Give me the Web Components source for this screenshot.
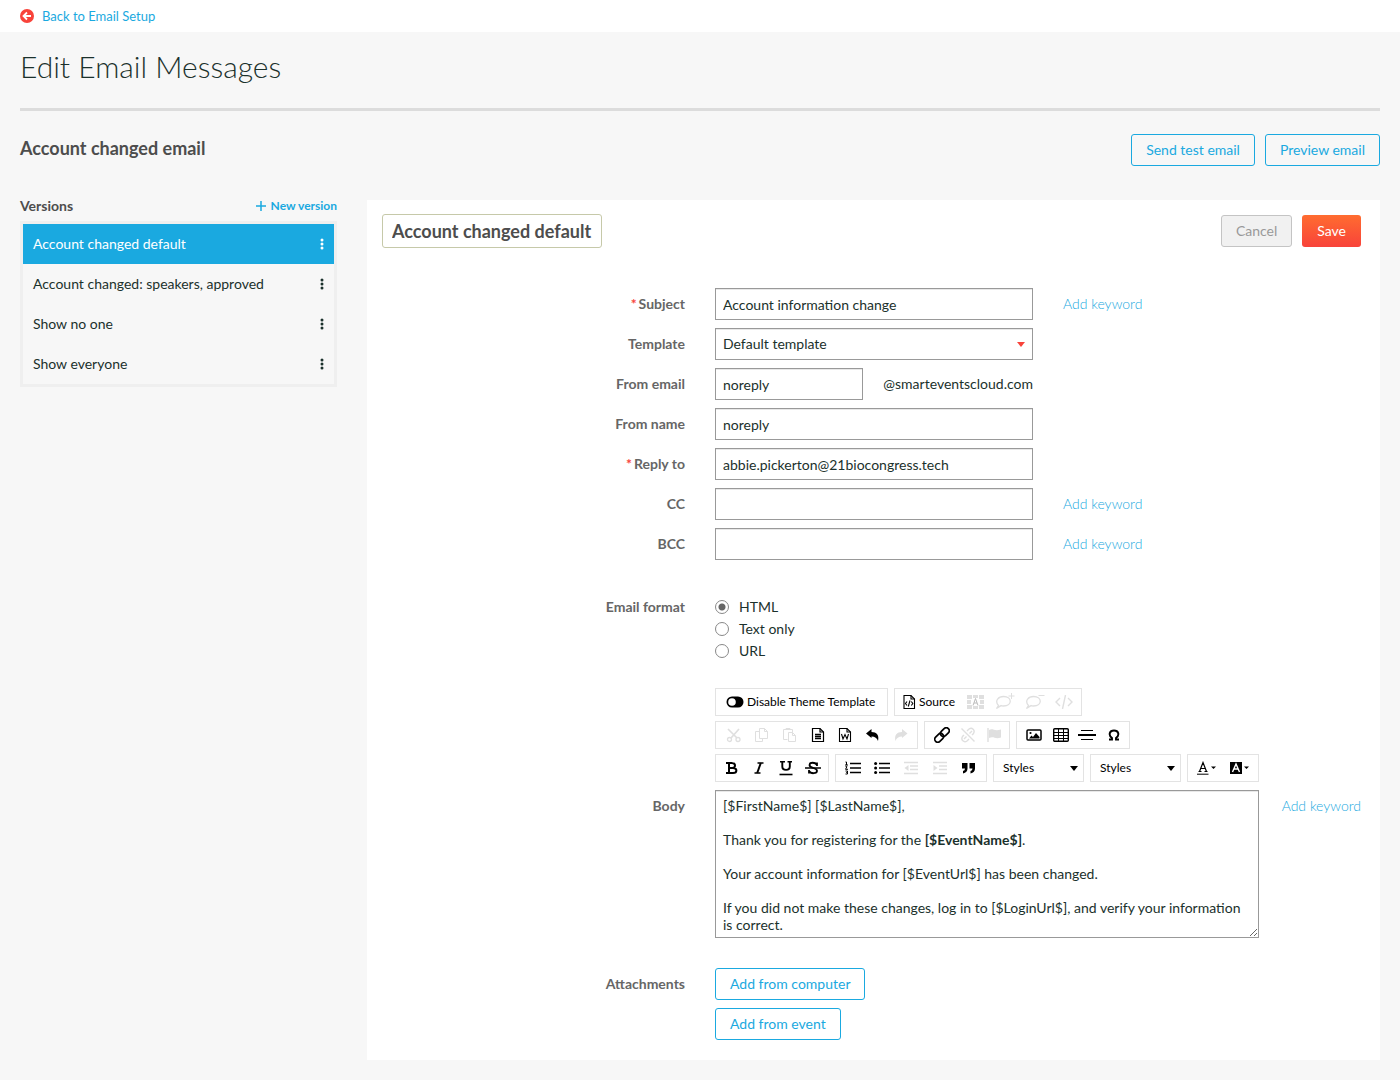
<!DOCTYPE html>
<html lang="en">
<head>
<meta charset="utf-8">
<meta name="viewport" content="width=device-width, initial-scale=1">
<title>Edit Email Messages</title>
<style>
    :root {
        --blue: #1aa9e0;
        --red: #f8433a;
        --ink: #1b312c;
        --heading: #4d4d4d;
        --line: #e3e3e3;
    }

    body {
        margin: 0;
        background: #f7f7f7;
        color: var(--ink);
        font: 14px/16px Lato, "Liberation Sans", sans-serif;
    }
</style>
</head>
<body>
<email-page>
    <back-link slot="top" href="#setup">Back to Email Setup</back-link>
    <app-button slot="actions">Send test email</app-button>
    <app-button slot="actions">Preview email</app-button>

    <version-list slot="side">
        <version-item active>Account changed default</version-item>
        <version-item>Account changed: speakers, approved</version-item>
        <version-item>Show no one</version-item>
        <version-item>Show everyone</version-item>
    </version-list>

    <message-panel name="Account changed default">
        <app-button slot="actions" kind="muted">Cancel</app-button>
        <app-button slot="actions" kind="primary">Save</app-button>

        <text-field label="Subject" value="Account information change" required keyword></text-field>
        <select-field label="Template" value="Default template"></select-field>
        <text-field label="From email" value="noreply" suffix="@smarteventscloud.com"></text-field>
        <text-field label="From name" value="noreply"></text-field>
        <text-field label="Reply to" value="abbie.pickerton@21biocongress.tech" required></text-field>
        <text-field label="CC" keyword></text-field>
        <text-field label="BCC" keyword></text-field>

        <radio-field label="Email format" options="HTML,Text only,URL"></radio-field>

        <body-editor>
            <p>[$FirstName$] [$LastName$],</p>
            <p>Thank you for registering for the <b>[$EventName$]</b>.</p>
            <p>Your account information for [$EventUrl$] has been changed.</p>
            <p>If you did not make these changes, log in to [$LoginUrl$], and verify your information is correct.</p>
        </body-editor>

        <attachment-field></attachment-field>
    </message-panel>
</email-page>

<script>
const svg = (w, h, body, extra = '') =>
    `<svg width="${w}" height="${h}" viewBox="0 0 ${w} ${h}" fill="none" stroke="currentColor" aria-hidden="true" ${extra}>${body}</svg>`;

const PAGE = '<path d="M1.5 1.5H9L12.500 5v9.500h-11z"/><path d="M9 1.500V5h3.500"/>';

const ICONS = {
    back: svg(14, 14, '<circle cx="7" cy="7" r="7" fill="#f8433a" stroke="none"/><path d="M11 7H4M7 3.5 3.5 7 7 10.5" stroke="#fff" stroke-width="1.8"/>'),
    plus: svg(10, 10, '<path d="M5 0v10M0 5h10" stroke-width="1.5"/>'),
    dots: svg(4, 12, '<g fill="currentColor" stroke="none"><circle cx="2" cy="2" r="1.5"/><circle cx="2" cy="6" r="1.5"/><circle cx="2" cy="10" r="1.5"/></g>'),
    toggle: svg(18, 12, '<rect x=".5" y=".5" width="17" height="11" rx="5.500" fill="currentColor" stroke="none"/><circle cx="6" cy="6" r="3.800" fill="#fff" stroke="none"/>'),
    source: svg(13, 16, '<path d="M1 1.500h7l3.500 3.500v9.500H1z"/><path d="M8 1.500V5h3.500M4 7.500 2.500 9.500 4 11.500M8.300 7.500l1.500 2-1.500 2M7 6.500 5.300 12.500"/>', 'stroke-width="1.1"'),
    blocks: svg(18, 16, '<g fill="currentColor" stroke="none"><path d="M0 1h5v4H0zM6 1h5v3H6zM12 1h5v4h-5zM0 6h4v4H0zM13 6h4v4h-4zM0 11h5v4H0zM6 12h5v3H6zM12 11h5v4h-5z"/></g><path d="m6 11.500 2.500-7 2.500 7M7 9h3" stroke="#bbb"/>'),
    commentAdd: svg(20, 18, '<path d="M3.500 12.500C-1 7.500 4 3.500 8.500 3.500c9 0 9 9.500 0 9.500-1 0-2 0-2.500-.4L1.500 15.500z" stroke-width="1.3"/><path d="M16.500 0v6M13.500 3h6"/>'),
    commentRemove: svg(20, 18, '<path d="M3.500 12.500C-1 7.500 4 3.500 8.500 3.500c9 0 9 9.500 0 9.500-1 0-2 0-2.500-.4L1.500 15.500z" stroke-width="1.3"/><path d="M13.500 2.500h6"/>'),
    code: svg(18, 14, '<path d="M5 3 1 7l4 4M13 3l4 4-4 4M10.500 0 7.500 14" stroke-width="1.4"/>'),
    cut: svg(16, 16, '<path d="m2 2 9 9M13 2 5 11" stroke-width="1.7"/><circle cx="3.500" cy="12.500" r="2"/><circle cx="12" cy="12.500" r="2"/>', 'stroke-width="1.3"'),
    copy: svg(16, 16, '<path d="M5.500 1.500h5l3 3v7h-8z"/><path d="M10.500 1.500v3h3M5.500 4.500h-4v10h7v-3"/>'),
    paste: svg(16, 16, '<path d="M5.500 12.500h-4v-10h9v3M4 2.500v-1h4v1"/><path d="M6.500 5.500h4l3 3v6h-7zM10.500 5.500v3h3"/>'),
    pasteText: svg(14, 16, PAGE + '<path d="M4 7.500h6M4 9.500h6M4 11.500h6" stroke-width="1.300"/>', 'stroke-width="1.2"'),
    pasteWord: svg(14, 16, PAGE + '<path d="m3.500 7 1.500 5 2-4.500L9 12l1.500-5"/>', 'stroke-width="1.1"'),
    undo: svg(16, 14, '<path d="M1 5.500 6.500 1v3c5 0 8 3 6.500 9-1-3-3-4.500-6.500-4.500V10z" fill="currentColor" stroke="none"/>'),
    redo: svg(16, 14, '<path d="M14.500 5.500 9 1v3C4 4 1 7 2.500 13c1-3 3-4.500 6.500-4.500V10z" fill="currentColor" stroke="none"/>'),
    link: svg(16, 16, '<g transform="rotate(-45 8 8)" stroke-width="1.700"><rect x="-1" y="5" width="10" height="6" rx="3"/><rect x="7" y="5" width="10" height="6" rx="3"/></g>'),
    unlink: svg(16, 16, '<path d="m1.500 1.500 13 13M7 4l2-2c3-2 6.500 1 4.500 4.500L12 8M9 12l-2 2c-3 2-6.500-1-4.500-4.500L4 8M9.500 6.500 12 4M4 12l2.500-2.500" stroke-width="1.4"/>'),
    flag: svg(16, 16, '<path d="M2 1v14" stroke-width="1.400"/><path d="M3 3c4-2 5 1.500 12-.5v8C9 12.500 8 9 3 11z" fill="currentColor" stroke="none"/>'),
    image: svg(16, 12, '<rect x="1" y="1" width="14" height="10" rx="1" stroke-width="1.500"/><path d="m3 9.500 2.500-3L7 8l3-4 3.500 4v1.500z" fill="currentColor" stroke="none"/><circle cx="4.500" cy="4" r="1.100" fill="currentColor" stroke="none"/>'),
    table: svg(16, 14, '<rect x=".7" y=".7" width="14.600" height="12.600" rx="1" stroke-width="1.400"/><path d="M1 4.500h14M1 7.500h14M1 10.500h14M5.500 1v12M10.500 1v12"/>'),
    rule: svg(18, 12, '<path d="M3 1.500h12M3 10.500h12"/><path d="M0 6h18" stroke-width="2"/>'),
    omega: svg(12, 12, '<path d="M1 10.500h3V9C0 6 1.500 1.500 6 1.500S12 6 8 9v1.500h3" stroke-width="1.900"/>'),
    bold: svg(12, 14, '<path d="M0 2h6.500M0 12h7M3 2v10M6 2c4 0 4 5 0 5H3h4c4.500 0 4.500 5 0 5" stroke-width="2"/>'),
    italic: svg(10, 14, '<path d="M3.500 2H9.500M.5 12h6" stroke-width="1.500"/><path d="M6.800 2 3.200 12" stroke-width="2"/>'),
    underline: svg(14, 16, '<path d="M1 1.800h5M8.500 1.800h4.500" stroke-width="1.500"/><path d="M3.300 2v4.500c0 4.500 7.500 4.500 7.500 0V2" stroke-width="1.900"/><path d="M.5 14.500h13" stroke-width="1.600"/>'),
    strike: svg(16, 14, '<path d="M12 5V1.500M12 4C10.500 1 4.500 1 4.500 4c0 2 2.500 2.500 4 3 2 .6 3.500 1.200 3.500 2.800C12 13 5.500 13 4 10M4 12.500V9" stroke-width="1.800"/><path d="M0 7h16" stroke-width="1.500"/>'),
    numbered: svg(16, 14, '<path d="M5 2.500h11M5 7h11M5 11.500h11" stroke-width="1.700"/><path d="M.5 1h1v3M0 4h3M.5 5.700h1.500L.5 8.300H3M.5 10h2v1.500h-1 1V13h-2"/>'),
    bullets: svg(16, 14, '<path d="M5 2.500h11M5 7h11M5 11.500h11" stroke-width="1.700"/><g fill="currentColor" stroke="none"><circle cx="1.600" cy="2.500" r="1.500"/><circle cx="1.600" cy="7" r="1.500"/><circle cx="1.600" cy="11.500" r="1.500"/></g>'),
    outdent: svg(14, 14, '<path d="M0 1.500h14M6 5h8M6 8.500h8M0 12.500h14" stroke-width="1.300"/><path d="m4.500 4-4 3 4 3z" fill="currentColor" stroke="none"/>'),
    indent: svg(14, 14, '<path d="M0 1.500h14M6 5h8M6 8.500h8M0 12.500h14" stroke-width="1.300"/><path d="m.5 4 4 3-4 3z" fill="currentColor" stroke="none"/>'),
    quote: svg(14, 12, '<path d="M0 1h5.500v5.500Q5.500 10.500 1 11.500V9Q3 8.500 3 6.500H0zM7.500 1H13v5.500q0 4-4.500 5V9q2-.5 2-2.500h-3z" fill="currentColor" stroke="none"/>'),
    textColor: svg(20, 14, '<path d="m2.500 10.500 3.500-9 3.500 9M3.500 7.500h5M1.500 10.500h3M7.500 10.500h3" stroke-width="1.200"/><path d="M0 13.200h11.500"/><path d="M14 5.500h5L16.500 8z" fill="currentColor" stroke="none"/>'),
    bgColor: svg(20, 14, '<rect x="0" y="1" width="12" height="12" fill="currentColor" stroke="none"/><path d="m2.500 11 3.500-8 3.500 8M4 8h4.500" stroke="#fff" stroke-width="1.400"/><path d="M14 5.500h5L16.500 8z" fill="currentColor" stroke="none"/>'),
    caret: svg(8, 5, '<path d="M0 0h8L4 5z" fill="currentColor" stroke="none"/>')
};

const RESET = `
    * { box-sizing: border-box; }
    button, input, select { margin: 0; font: inherit; color: inherit; }
    button { cursor: pointer; }
    svg { display: block; flex: none; }
`;

const FIELD = RESET + `
    :host { display: block; }
    label[slot], span[slot] { color: #666; font-weight: 700; }
    .required { margin-right: 2px; color: var(--red); }
    input[type=text], select {
        width: 318px;
        height: 32px;
        padding: 0 7px;
        border: 1px solid #999;
        border-radius: 0;
        background: #fff;
        box-shadow: inset 0 1px 0 #e8e8e8;
    }
`;

class BaseElement extends HTMLElement {

    constructor() {
        super();
        this.shadowDOM = this.attachShadow({ mode: "open" });
    }

    connectedCallback() {
        this.render();
    }

    attr(name) {
        return this.getAttribute(name) || '';
    }
}

class EmailPage extends BaseElement {
    render() {
        this.shadowDOM.innerHTML = `
        <style>
            ${RESET}
            :host { display: block; }
            nav {
                height: 32px;
                padding: 0 20px;
                background: #fff;
            }
            main { padding: 14px 20px 20px; }
            h1 {
                margin: 0;
                padding-bottom: 22px;
                border-bottom: 3px solid #dcdcdc;
                font-size: 30px;
                font-weight: 300;
                line-height: 40px;
            }
            .bar {
                display: flex;
                justify-content: space-between;
                padding: 23px 0 25px;
            }
            h2 {
                margin: 0;
                color: var(--heading);
                font-size: 18px;
                line-height: 28px;
            }
            .actions { display: flex; gap: 10px; }
            .columns {
                display: grid;
                grid-template-columns: 317px 1fr;
                gap: 30px;
            }
            .content { padding-top: 9px; }
        </style>
        <nav><slot name="top"></slot></nav>
        <main>
            <h1>Edit Email Messages</h1>
            <div class="bar">
                <h2>Account changed email</h2>
                <div class="actions"><slot name="actions"></slot></div>
            </div>
            <div class="columns">
                <aside><slot name="side"></slot></aside>
                <div class="content"><slot></slot></div>
            </div>
        </main>`;
    }
}
customElements.define("email-page", EmailPage);

class BackLink extends BaseElement {
    render() {
        this.shadowDOM.innerHTML = `
        <style>
            ${RESET}
            :host { display: block; }
            a {
                display: inline-flex;
                align-items: center;
                gap: 8px;
                height: 32px;
                color: var(--blue);
                font-size: 13px;
                text-decoration: none;
            }
        </style>
        <a href="${this.attr('href')}">${ICONS.back}<slot></slot></a>`;
    }
}
customElements.define("back-link", BackLink);

class AppButton extends BaseElement {
    render() {
        this.shadowDOM.innerHTML = `
        <style>
            ${RESET}
            :host { display: block; }
            button {
                display: block;
                height: 32px;
                padding: 0 14px;
                border: 1px solid var(--blue);
                border-radius: 3px;
                background: transparent;
                color: var(--blue);
                white-space: nowrap;
            }
            .muted {
                border-color: #c4c4c4;
                background: #f1f1f1;
                color: #999;
            }
            .primary {
                border-color: transparent;
                background: linear-gradient(#ff6c30, #f8433a) border-box;
                color: #fff;
            }
        </style>
        <button type="button" class="${this.attr('kind')}"><slot></slot></button>`;
    }
}
customElements.define("app-button", AppButton);

class VersionList extends BaseElement {
    render() {
        this.shadowDOM.innerHTML = `
        <style>
            ${RESET}
            :host { display: block; }
            header {
                display: flex;
                align-items: center;
                justify-content: space-between;
                height: 30px;
            }
            h3 {
                margin: 0;
                color: var(--heading);
                font-size: 14px;
            }
            button {
                display: flex;
                align-items: center;
                gap: 5px;
                padding: 0;
                border: 0;
                background: none;
                color: var(--blue);
                font-size: 12px;
                font-weight: 700;
            }
            .list { border: 3px solid #efefef; }
        </style>
        <header>
            <h3>Versions</h3>
            <button type="button">${ICONS.plus}New version</button>
        </header>
        <div class="list"><slot></slot></div>`;
    }
}
customElements.define("version-list", VersionList);

class VersionItem extends BaseElement {
    render() {
        this.shadowDOM.innerHTML = `
        <style>
            ${RESET}
            :host {
                display: flex;
                align-items: center;
                justify-content: space-between;
                height: 40px;
                padding: 0 10px;
            }
            :host([active]) {
                background: var(--blue);
                color: #fff;
            }
            button {
                padding: 0;
                border: 0;
                background: none;
            }
        </style>
        <span><slot></slot></span>
        <button type="button" aria-label="Version options">${ICONS.dots}</button>`;
    }
}
customElements.define("version-item", VersionItem);

class MessagePanel extends BaseElement {
    render() {
        this.shadowDOM.innerHTML = `
        <style>
            ${RESET}
            :host {
                display: block;
                padding: 14px 19px 20px 15px;
                background: #fff;
            }
            header {
                display: flex;
                align-items: center;
                justify-content: space-between;
                margin-bottom: 40px;
            }
            input {
                width: 220px;
                height: 34px;
                padding: 0 9px;
                border: 1px solid #c6c9a9;
                border-radius: 3px;
                color: var(--heading);
                font-size: 18px;
                font-weight: 700;
            }
            .actions { display: flex; gap: 10px; }
            .fields {
                display: flex;
                flex-direction: column;
                gap: 8px;
            }
        </style>
        <header>
            <input type="text" aria-label="Version name" value="${this.attr('name')}">
            <div class="actions"><slot name="actions"></slot></div>
        </header>
        <div class="fields"><slot></slot></div>`;
    }
}
customElements.define("message-panel", MessagePanel);

class FormRow extends BaseElement {
    render() {
        this.shadowDOM.innerHTML = `
        <style>
            :host {
                display: grid;
                grid-template-columns: 303fr 646fr;
                gap: 30px;
            }
            .label {
                padding-top: 8px;
                text-align: right;
            }
            .control {
                display: flex;
                gap: 30px;
                min-width: 0;
            }
        </style>
        <div class="label"><slot name="label"></slot></div>
        <div class="control"><slot></slot></div>`;
    }
}
customElements.define("form-row", FormRow);

class KeywordLink extends BaseElement {
    render() {
        this.shadowDOM.innerHTML = `
        <style>
            :host { display: block; padding-top: 8px; }
            a {
                color: var(--blue);
                font-weight: 300;
                text-decoration: none;
                white-space: nowrap;
            }
        </style>
        <a href="#keyword">Add keyword</a>`;
    }
}
customElements.define("keyword-link", KeywordLink);

class TextField extends BaseElement {
    render() {
        const suffix = this.attr('suffix');
        this.shadowDOM.innerHTML = `
        <style>
            ${FIELD}
            .group {
                display: flex;
                align-items: center;
                gap: 20px;
                width: 318px;
            }
            .group input { flex: 1; width: 0; min-width: 0; }
        </style>
        <form-row>
            <label slot="label" for="control">${this.hasAttribute('required') ? '<span class="required">*</span>' : ''}${this.attr('label')}</label>
            <div class="group">
                <input type="text" id="control" value="${this.attr('value')}">
                ${suffix ? `<span>${suffix}</span>` : ''}
            </div>
            ${this.hasAttribute('keyword') ? '<keyword-link></keyword-link>' : ''}
        </form-row>`;
    }
}
customElements.define("text-field", TextField);

class SelectField extends BaseElement {
    render() {
        this.shadowDOM.innerHTML = `
        <style>
            ${FIELD}
            .wrap { display: grid; align-items: center; }
            .wrap > * { grid-area: 1 / 1; }
            select { appearance: none; }
            svg {
                justify-self: end;
                margin-right: 8px;
                color: var(--red);
                pointer-events: none;
            }
        </style>
        <form-row>
            <label slot="label" for="control">${this.attr('label')}</label>
            <div class="wrap">
                <select id="control"><option>${this.attr('value')}</option></select>
                ${ICONS.caret}
            </div>
        </form-row>`;
    }
}
customElements.define("select-field", SelectField);

class RadioField extends BaseElement {
    render() {
        const radios = this.attr('options').split(',').map((text, i) => `
            <label><input type="radio" name="format" ${i === 0 ? 'checked' : ''}>${text}</label>`).join('');
        this.shadowDOM.innerHTML = `
        <style>
            ${FIELD}
            :host { padding: 23px 0 18px; }
            .options {
                display: flex;
                flex-direction: column;
                padding-top: 5px;
            }
            .options label {
                display: flex;
                align-items: center;
                gap: 10px;
                height: 22px;
            }
            input {
                appearance: none;
                width: 14px;
                height: 14px;
                border: 1px solid #888;
                border-radius: 50%;
                background: #fff;
            }
            input:checked { background: radial-gradient(circle, #666 3px, #fff 4px); }
        </style>
        <form-row>
            <span slot="label" id="caption">${this.attr('label')}</span>
            <div class="options" role="radiogroup" aria-labelledby="caption">${radios}</div>
        </form-row>`;
    }
}
customElements.define("radio-field", RadioField);

class ToolGroup extends BaseElement {
    render() {
        const off = this.attr('off').split(' ');
        const buttons = this.attr('icons').split(' ').filter(Boolean).map(name => `
            <button type="button" class="icon" aria-label="${name}" ${off.includes(name) ? 'disabled' : ''}>${ICONS[name]}</button>`).join('');
        const text = this.attr('text');
        this.shadowDOM.innerHTML = `
        <style>
            ${RESET}
            :host {
                box-sizing: border-box;
                display: flex;
                height: 28px;
                padding: 0 2px 0 4px;
                border: 1px solid var(--line);
                background: #fff;
                color: #000;
                font-size: 12px;
            }
            :host([tight]) { padding: 0 2px; }
            button {
                display: flex;
                align-items: center;
                justify-content: center;
                padding: 0;
                border: 0;
                background: none;
            }
            .icon { flex: 1; min-width: 0; }
            .text { gap: 3px; padding: 0 6px; white-space: nowrap; }
            button:disabled { color: #dfdfdf; cursor: default; }
        </style>
        ${text ? `<button type="button" class="text">${ICONS[this.attr('text-icon')]}${text}</button>` : ''}
        ${buttons}`;
    }
}
customElements.define("tool-group", ToolGroup);

class ToolSelect extends BaseElement {
    render() {
        this.shadowDOM.innerHTML = `
        <style>
            ${RESET}
            :host {
                box-sizing: border-box;
                display: grid;
                align-items: center;
                width: 91px;
                height: 28px;
                border: 1px solid var(--line);
                color: #000;
                font-size: 12px;
            }
            select, svg { grid-area: 1 / 1; }
            select {
                appearance: none;
                width: 100%;
                height: 26px;
                padding: 0 9px;
                border: 0;
                background: #fff;
            }
            svg {
                justify-self: end;
                margin-right: 5px;
                pointer-events: none;
            }
        </style>
        <select aria-label="${this.attr('label')}"><option>Styles</option></select>
        ${ICONS.caret}`;
    }
}
customElements.define("tool-select", ToolSelect);

class BodyEditor extends BaseElement {
    render() {
        this.shadowDOM.innerHTML = `
        <style>
            ${FIELD}
            .toolbar {
                display: flex;
                flex-direction: column;
                gap: 5px;
                padding-bottom: 8px;
            }
            .line { display: flex; gap: 6px; }
            .w72 { width: 72px; }
            .w86 { width: 86px; }
            .w114 { width: 114px; }
            .w152 { width: 152px; }
            .w173 { width: 173px; }
            .w188 { width: 188px; }
            .w203 { width: 203px; }
            .editor {
                flex: 1;
                height: 148px;
                margin-right: -7px;
                padding: 6px 7px;
                border: 1px solid #999;
                box-shadow: inset 0 1px 0 #e8e8e8;
                line-height: 17px;
                overflow: hidden;
                resize: vertical;
            }
            ::slotted(p) { margin: 0 0 17px; }
        </style>
        <form-row>
            <div class="toolbar" role="toolbar" aria-label="Formatting">
                <div class="line">
                    <tool-group class="w173" text="Disable Theme Template" text-icon="toggle"></tool-group>
                    <tool-group tight class="w188" text="Source" text-icon="source" icons="blocks commentAdd commentRemove code" off="blocks commentAdd commentRemove code"></tool-group>
                </div>
                <div class="line">
                    <tool-group class="w203" icons="cut copy paste pasteText pasteWord undo redo" off="cut copy paste redo"></tool-group>
                    <tool-group class="w86" icons="link unlink flag" off="unlink flag"></tool-group>
                    <tool-group class="w114" icons="image table rule omega"></tool-group>
                </div>
                <div class="line">
                    <tool-group tight class="w114" icons="bold italic underline strike"></tool-group>
                    <tool-group tight class="w152" icons="numbered bullets outdent indent quote" off="outdent indent"></tool-group>
                    <tool-select label="Styles"></tool-select>
                    <tool-select label="Formats"></tool-select>
                    <tool-group tight class="w72" icons="textColor bgColor"></tool-group>
                </div>
            </div>
        </form-row>
        <form-row>
            <span slot="label" id="caption">Body</span>
            <div class="editor" contenteditable="true" role="textbox" aria-multiline="true" aria-labelledby="caption" spellcheck="false"><slot></slot></div>
            <keyword-link></keyword-link>
        </form-row>`;
    }
}
customElements.define("body-editor", BodyEditor);

class AttachmentField extends BaseElement {
    render() {
        this.shadowDOM.innerHTML = `
        <style>
            ${FIELD}
            :host { padding-top: 22px; }
            .buttons {
                display: flex;
                flex-direction: column;
                align-items: flex-start;
                gap: 8px;
            }
        </style>
        <form-row>
            <span slot="label">Attachments</span>
            <div class="buttons">
                <app-button>Add from computer</app-button>
                <app-button>Add from event</app-button>
            </div>
        </form-row>`;
    }
}
customElements.define("attachment-field", AttachmentField);
</script>
</body>
</html>
